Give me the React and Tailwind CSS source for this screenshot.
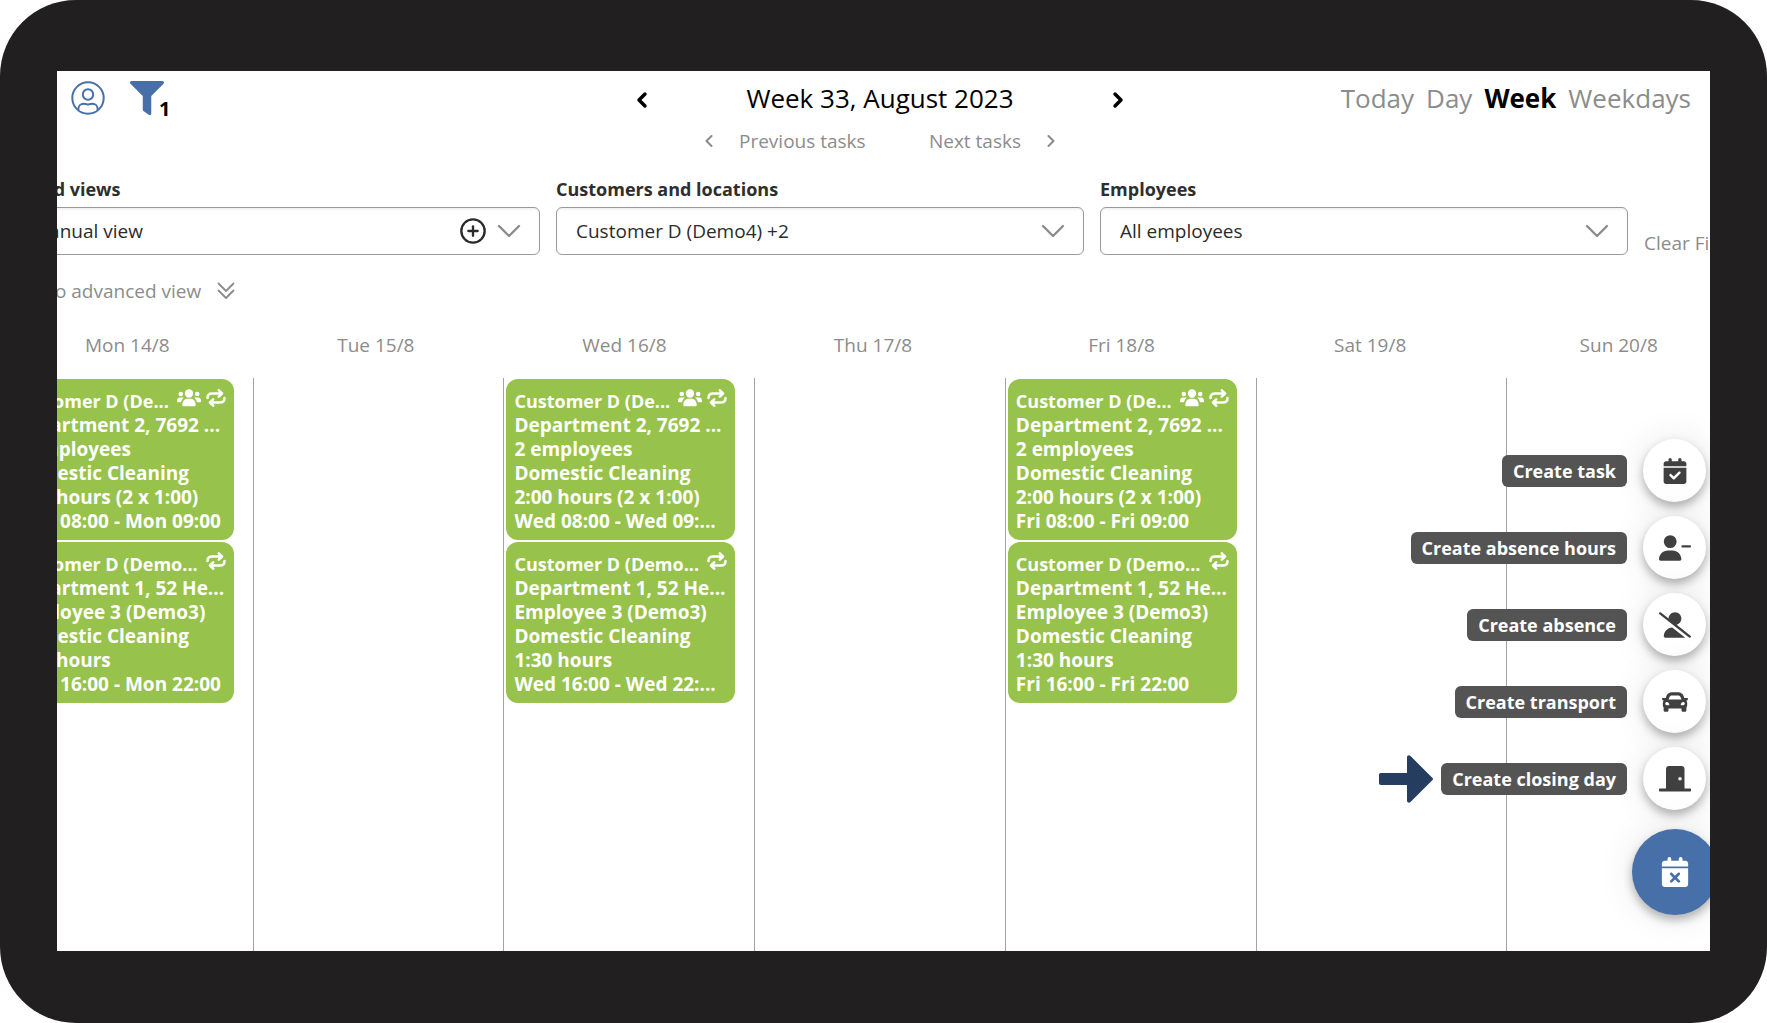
import React from "react";
import {
  FaCalendarCheck,
  FaCalendarXmark,
  FaUserMinus,
  FaUserSlash,
} from "react-icons/fa6";
import { FaCar, FaFilter } from "react-icons/fa";
import { ChevronLeft, ChevronRight, CirclePlus } from "lucide-react";

const days = [
  { label: "Mon 14/8", tasks: true, first: "Mon 08:00 - Mon 09:00", second: "Mon 16:00 - Mon 22:00" },
  { label: "Tue 15/8" },
  { label: "Wed 16/8", tasks: true, first: "Wed 08:00 - Wed 09:...", second: "Wed 16:00 - Wed 22:..." },
  { label: "Thu 17/8" },
  { label: "Fri 18/8", tasks: true, first: "Fri 08:00 - Fri 09:00", second: "Fri 16:00 - Fri 22:00" },
  { label: "Sat 19/8" },
  { label: "Sun 20/8" },
];

const actions = [
  { label: "Create task", Icon: FaCalendarCheck },
  { label: "Create absence hours", Icon: FaUserMinus },
  { label: "Create absence", Icon: FaUserSlash },
  { label: "Create transport", Icon: FaCar },
  { label: "Create closing day", Icon: Door, pointed: true },
];

function Door({ className }) {
  return (
    <svg viewBox="0 0 32 26" className={className} fill="currentColor">
      <path
        fillRule="evenodd"
        d="M7 22.500V3c0-1.700 1.300-3 3-3h12.500c1.700 0 3 1.300 3 3v19.500H31c.6 0 1 .4 1 1v1c0 .6-.4 1-1 1H1c-.6 0-1-.4-1-1v-1c0-.6.4-1 1-1zM21 11a1.800 1.800 0 1 0 0 3.600 1.800 1.800 0 0 0 0-3.600z"
      />
    </svg>
  );
}

function Group() {
  return (
    <svg viewBox="0 0 24 18" className="h-[18px] w-6" fill="currentColor">
      <circle cx="12" cy="4.500" r="4.200" />
      <circle cx="3.800" cy="5" r="2.300" />
      <circle cx="20.200" cy="5" r="2.300" />
      <path d="M5.300 16c0-3.800 2.200-6.300 5-6.300h3.400c2.800 0 5 2.500 5 6.300 0 .8-.5 1.300-1.200 1.300h-11c-.7 0-1.200-.5-1.200-1.300z" />
      <path d="M0 11.600C0 9.800 1.300 8.500 3 8.500h2.600c.5 0 1 .1 1.300.3-1.500 1-2.500 2.600-2.900 4.500H1c-.6 0-1-.5-1-1.100zM24 11.600c0-1.800-1.300-3.100-3-3.100h-2.600c-.5 0-1 .1-1.300.3 1.500 1 2.500 2.600 2.900 4.500h3c.6 0 1-.5 1-1.100z" />
    </svg>
  );
}

function Repeat() {
  return (
    <svg viewBox="0 0 20 18" className="h-[18px] w-5" fill="none" stroke="currentColor" strokeWidth="2.500" strokeLinecap="round" strokeLinejoin="round">
      <path d="M1.500 9C1.500 6 3.500 4.500 6 4.500h9.500M12.800 1.300L16 4.500l-3.200 3.200M18.500 9c0 3-2 4.500-4.500 4.500H4.500M7.200 10.300L4 13.500l3.200 3.200" />
    </svg>
  );
}

function DoubleCaret() {
  return (
    <svg viewBox="0 0 18 18" className="size-[18px]" fill="none" stroke="currentColor" strokeWidth="1.800" strokeLinecap="round" strokeLinejoin="round">
      <path d="M1.500 1.500L9 9l7.500-7.500M1.500 8.500L9 16l7.500-7.500" />
    </svg>
  );
}

function UserCircle() {
  return (
    <svg viewBox="0 0 34 34" className="size-[34px]" fill="none" stroke="currentColor" strokeWidth="2">
      <circle cx="17" cy="17" r="15.7" />
      <circle cx="17" cy="13.5" r="5.2" />
      <path d="M7.4 29.2v-1.4c0-3 2.300-5 5-5 1.500 0 2.500.6 4.600.6s3.100-.6 4.600-.6c2.700 0 5 2 5 5v1.400" />
    </svg>
  );
}

function Caret() {
  return (
    <svg viewBox="0 0 24 14" className="h-[14px] w-6" fill="none" stroke="#8c8c8c" strokeWidth="2.400" strokeLinecap="round" strokeLinejoin="round">
      <path d="M2 2l10 10L22 2" />
    </svg>
  );
}

function Pointer() {
  return (
    <svg viewBox="0 0 54 48" className="h-12 w-[54px]" fill="#253e5f" aria-hidden="true">
      <path d="M2 18h26V2.500c0-2 2-3 3.500-1.500l22 22c.7.7.7 1.300 0 2l-22 22c-1.500 1.500-3.500.5-3.500-1.500V30H2c-1.300 0-2-.7-2-2v-8c0-1.300.7-2 2-2z" />
    </svg>
  );
}

function Filter({ id, label, value, addable }) {
  return (
    <div className="flex min-w-0 flex-1 flex-col gap-1">
      <label htmlFor={id} className="text-lg leading-7 font-bold text-[#2e2e2e]">
        {label}
      </label>
      <div className="relative">
        <select
          id={id}
          className="h-12 w-full appearance-none rounded-md border border-[#9a9a9a] bg-white px-[19px] text-[19px] text-[#2b2b2b] shadow-[inset_0_2px_2px_rgba(0,0,0,0.05)]"
        >
          <option>{value}</option>
        </select>
        <div className="pointer-events-none absolute inset-y-0 right-[19px] flex items-center gap-[10px]">
          {addable && (
            <button type="button" aria-label="Add view" className="pointer-events-auto text-[#2b2b2b]">
              <CirclePlus className="size-7" strokeWidth={2} />
            </button>
          )}
          <Caret />
        </div>
      </div>
    </div>
  );
}

function Task({ title, lines, group }) {
  return (
    <article className="relative mr-[19px] overflow-hidden rounded-xl bg-[#97c24b] px-2 pt-[10px] pb-[7px] text-[19px] leading-6 font-bold whitespace-nowrap text-white">
      <h2 className="text-lg leading-6">{title}</h2>
      {lines.map((line) => (
        <p key={line}>{line}</p>
      ))}
      <div className="absolute top-[10px] right-2 flex items-center gap-[5px]">
        {group && <Group />}
        <Repeat />
      </div>
    </article>
  );
}

function Header() {
  return (
    <header className="grid grid-cols-[1fr_auto_1fr] items-start pt-[10px] pr-[7px]">
      <div className="flex items-start gap-[25px] pl-[14px] text-[#4870a8]">
        <button type="button" aria-label="Profile">
          <UserCircle />
        </button>
        <button type="button" aria-label="Filters" className="flex items-end">
          <FaFilter className="size-[34px]" />
          <span className="-ml-[5px] text-xl leading-3 font-bold text-black">1</span>
        </button>
      </div>
      <div className="flex flex-col items-center gap-[10px]">
        <div className="flex w-[500px] items-center justify-between">
          <button type="button" aria-label="Previous week" className="pt-1">
            <ChevronLeft className="size-6" strokeWidth={3.500} />
          </button>
          <h1 className="text-[26px] leading-[34px] text-black">Week 33, August 2023</h1>
          <button type="button" aria-label="Next week" className="pt-1">
            <ChevronRight className="size-6" strokeWidth={3.500} />
          </button>
        </div>
        <div className="flex w-[362px] items-center justify-between text-[19px] leading-8 text-[#8c8c8c]">
          <button type="button" className="flex items-center gap-5">
            <ChevronLeft className="size-5" strokeWidth={2.500} />
            Previous tasks
          </button>
          <button type="button" className="flex items-center gap-5">
            Next tasks
            <ChevronRight className="size-5" strokeWidth={2.500} />
          </button>
        </div>
      </div>
      <nav className="flex justify-end gap-3 pr-3 text-[26px] leading-[34px] text-[#8c8c8c]">
        <button type="button">Today</button>
        <button type="button">Day</button>
        <button type="button" className="font-bold text-black">Week</button>
        <button type="button">Weekdays</button>
      </nav>
    </header>
  );
}

function Calendar() {
  return (
    <section className="flex flex-1 flex-col">
      <div className="grid grid-cols-7 pr-[14px] pl-px text-center text-[19px] leading-7 text-[#8c8c8c]">
        {days.map((day) => (
          <div key={day.label}>{day.label}</div>
        ))}
      </div>
      <div className="mt-[19px] grid flex-1 grid-cols-7">
        {days.map((day) => (
          <div key={day.label} className="flex flex-col gap-[2px] border-l border-[#a3a3a3] pt-px pl-[2px]">
            {day.tasks && (
              <>
                <Task
                  group
                  title="Customer D (De..."
                  lines={["Department 2, 7692 ...", "2 employees", "Domestic Cleaning", "2:00 hours (2 x 1:00)", day.first]}
                />
                <Task
                  title="Customer D (Demo..."
                  lines={["Department 1, 52 He...", "Employee 3 (Demo3)", "Domestic Cleaning", "1:30 hours", day.second]}
                />
              </>
            )}
          </div>
        ))}
      </div>
    </section>
  );
}

function QuickActions() {
  return (
    <div className="absolute -right-2 bottom-9 flex flex-col items-end">
      <div className="flex flex-col items-end gap-[14px] pr-3">
        {actions.map(({ label, Icon, pointed }) => (
          <button key={label} type="button" className="flex items-center text-lg font-bold text-white">
            {pointed && <Pointer />}
            <span className="mr-4 ml-2 rounded-md bg-[#545454] px-[11px] leading-8">{label}</span>
            <span className="flex size-[63px] items-center justify-center rounded-full bg-white text-[#404040] shadow-[0_5px_10px_rgba(0,0,0,0.28),0_0_36px_rgba(0,0,0,0.1)]">
              <Icon className="h-[26px] w-8" />
            </span>
          </button>
        ))}
      </div>
      <button
        type="button"
        aria-label="Close menu"
        className="mt-[19px] flex size-[86px] items-center justify-center rounded-full bg-[#4870a8] text-white shadow-[0_5px_10px_rgba(0,0,0,0.28),0_0_36px_rgba(0,0,0,0.1)]"
      >
        <FaCalendarXmark className="size-[30px]" />
      </button>
    </div>
  );
}

export default function App() {
  return (
    <div className="bg-white font-['Open_Sans',sans-serif]">
      <div className="flex h-screen min-h-[900px] rounded-[76px] bg-[#221f20] px-[57px] pt-[71px] pb-[72px]">
        <main className="relative flex min-w-0 flex-1 flex-col overflow-hidden bg-white">
          <Header />
          <div className="-mr-[47px] -ml-[55px] flex flex-1 flex-col">
            <div className="mt-[18px] flex items-end gap-4 pl-[10px]">
              <Filter id="views" label="Saved views" value="Manual view" addable />
              <Filter id="customers" label="Customers and locations" value="Customer D (Demo4) +2" />
              <Filter id="employees" label="Employees" value="All employees" />
              <button type="button" className="w-[113px] text-left text-[19px] leading-6 text-[#8c8c8c]">
                Clear Filters
              </button>
            </div>
            <button type="button" className="mt-[22px] mb-[26px] flex items-center gap-4 self-start pl-4 text-[19px] leading-7 text-[#8c8c8c]">
              Go to advanced view
              <DoubleCaret />
            </button>
            <Calendar />
          </div>
          <QuickActions />
        </main>
      </div>
    </div>
  );
}
